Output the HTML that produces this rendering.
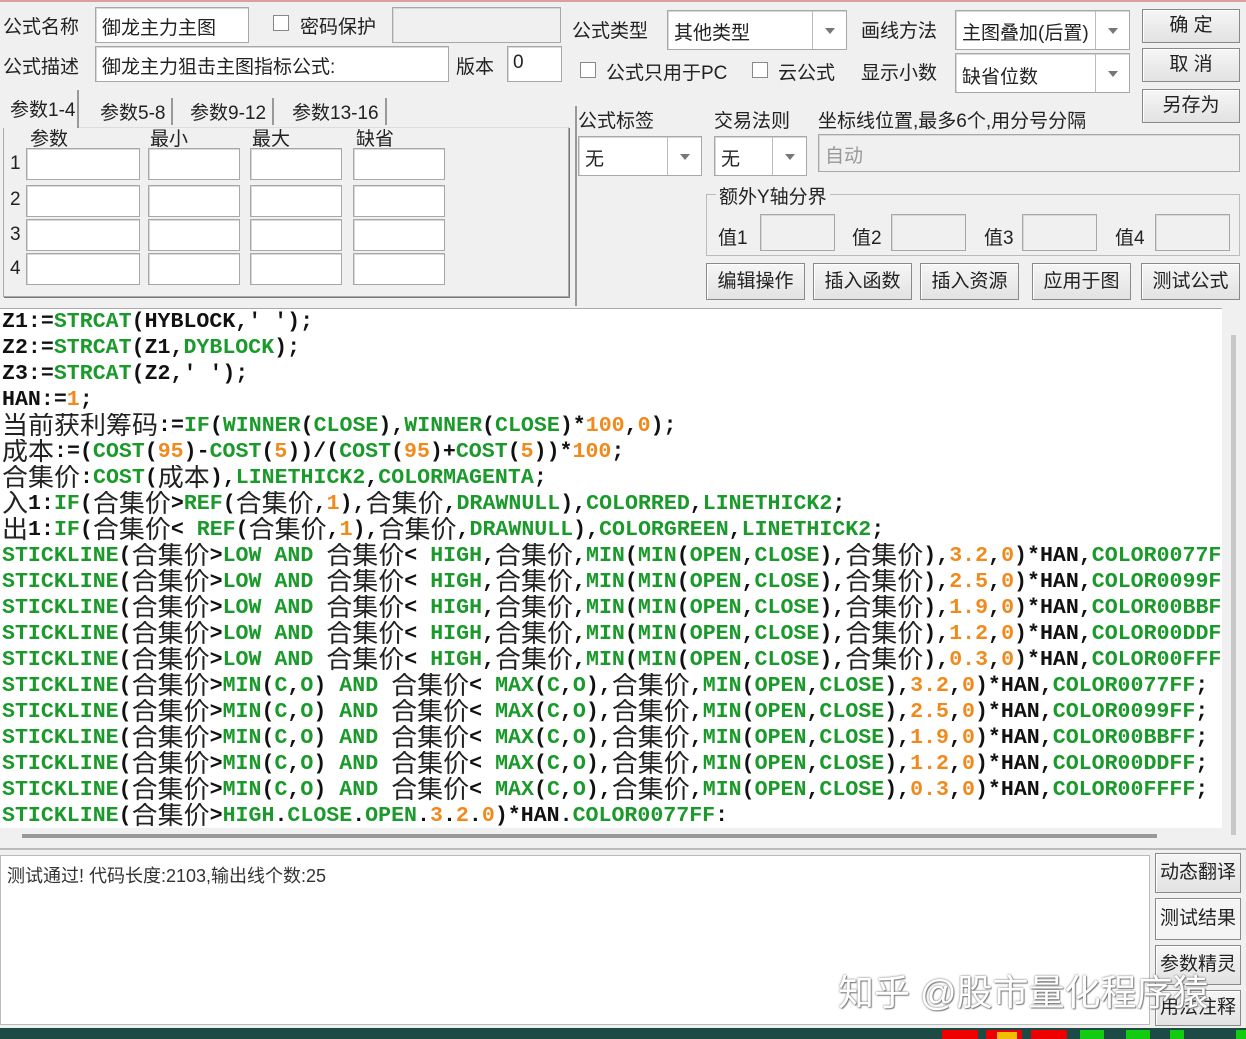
<!DOCTYPE html>
<html><head><meta charset="utf-8"><style>
*{box-sizing:border-box;margin:0;padding:0}
body{width:1246px;height:1039px;background:#f0f0f0;position:relative;overflow:hidden;font-family:"Liberation Sans","Noto Sans CJK SC",sans-serif;font-size:19px;color:#222}
.a{position:absolute;white-space:nowrap}
.in{position:absolute;background:#fff;border:1px solid #a8a8a8;box-shadow:inset 1px 1px 0 #d8d8d8}
.dis{background:#f0f0f0}
.btn{position:absolute;background:linear-gradient(#f6f6f6,#e2e2e2);border:1px solid #8a8a8a;box-shadow:inset 1px 1px 0 #fff;text-align:center;font-size:19px}
.cb{position:absolute;width:16px;height:16px;border:1px solid #888;background:#fff}
.dd{position:absolute;top:0;right:0;width:34px;height:100%;border-left:1px solid #bbb}
.dd:after{content:"";position:absolute;left:12px;top:45%;border:5px solid transparent;border-top:6px solid #777}
#code{position:absolute;left:0;top:308px;width:1222px;height:520px;background:#fff;overflow:hidden;border-top:1px solid #aaa}
.l{height:26px;line-height:26px;font-family:"Liberation Mono",monospace;font-weight:bold;font-size:21.6px;color:#111;white-space:nowrap;padding-left:2px;overflow:hidden}
.l i{font-style:normal;color:#1a9a2a}
.l b{color:#f08a1c}
.l u{text-decoration:none;font-family:"Noto Sans CJK SC",sans-serif;font-weight:normal;font-size:26px;line-height:22px;display:inline-block;height:26px;vertical-align:top;color:#222}
</style></head><body>
<div class="a" style="left:0;top:0;width:1246px;height:2px;background:#d9a0a0"></div>
<div class="a" style="left:3px;top:12px">公式名称</div>
<div class="in" style="left:95px;top:7px;width:154px;height:36px"></div><div class="a" style="left:102px;top:13px">御龙主力主图</div>
<div class="cb" style="left:273px;top:15px"></div><div class="a" style="left:300px;top:12px">密码保护</div>
<div class="in dis" style="left:392px;top:7px;width:169px;height:36px"></div>
<div class="a" style="left:3px;top:52px">公式描述</div>
<div class="in" style="left:95px;top:46px;width:354px;height:36px"></div><div class="a" style="left:102px;top:52px">御龙主力狙击主图指标公式:</div>
<div class="a" style="left:456px;top:52px">版本</div>
<div class="in" style="left:507px;top:46px;width:55px;height:36px"></div><div class="a" style="left:513px;top:52px">0</div>
<div class="a" style="left:3px;top:127px;width:566px;height:170px;border:1px solid #aaa;border-top:1px solid #ddd;box-shadow:1px 1px 0 #777"></div>
<div class="a" style="left:3px;top:90px;width:76px;height:38px;background:#f0f0f0;border-right:2px solid #999"></div>
<div class="a" style="left:10px;top:95px">参数1-4</div>
<div class="a" style="left:100px;top:98px;border-right:2px solid #999;padding-right:6px">参数5-8</div>
<div class="a" style="left:190px;top:98px;border-right:2px solid #999;padding-right:6px">参数9-12</div>
<div class="a" style="left:292px;top:98px;border-right:2px solid #999;padding-right:6px">参数13-16</div>
<div class="a" style="left:30px;top:124px">参数</div><div class="a" style="left:150px;top:124px">最小</div><div class="a" style="left:252px;top:124px">最大</div><div class="a" style="left:356px;top:124px">缺省</div>
<div class="a" style="left:10px;top:153px">1</div><div class="a" style="left:10px;top:189px">2</div><div class="a" style="left:10px;top:224px">3</div><div class="a" style="left:10px;top:258px">4</div>
<div class="in" style="left:26px;top:148px;width:114px;height:32px"></div><div class="in" style="left:148px;top:148px;width:92px;height:32px"></div><div class="in" style="left:250px;top:148px;width:92px;height:32px"></div><div class="in" style="left:353px;top:148px;width:92px;height:32px"></div>
<div class="in" style="left:26px;top:185px;width:114px;height:32px"></div><div class="in" style="left:148px;top:185px;width:92px;height:32px"></div><div class="in" style="left:250px;top:185px;width:92px;height:32px"></div><div class="in" style="left:353px;top:185px;width:92px;height:32px"></div>
<div class="in" style="left:26px;top:219px;width:114px;height:32px"></div><div class="in" style="left:148px;top:219px;width:92px;height:32px"></div><div class="in" style="left:250px;top:219px;width:92px;height:32px"></div><div class="in" style="left:353px;top:219px;width:92px;height:32px"></div>
<div class="in" style="left:26px;top:253px;width:114px;height:32px"></div><div class="in" style="left:148px;top:253px;width:92px;height:32px"></div><div class="in" style="left:250px;top:253px;width:92px;height:32px"></div><div class="in" style="left:353px;top:253px;width:92px;height:32px"></div>
<div class="a" style="left:572px;top:16px">公式类型</div>
<div class="in" style="left:667px;top:10px;width:180px;height:40px"><div class="dd"></div></div><div class="a" style="left:674px;top:18px">其他类型</div>
<div class="a" style="left:861px;top:16px">画线方法</div>
<div class="in" style="left:955px;top:10px;width:175px;height:40px"><div class="dd"></div></div><div class="a" style="left:962px;top:18px">主图叠加(后置)</div>
<div class="btn" style="left:1142px;top:9px;width:98px;height:34px;line-height:32px">确 定</div>
<div class="btn" style="left:1142px;top:48px;width:98px;height:34px;line-height:32px">取 消</div>
<div class="btn" style="left:1142px;top:89px;width:98px;height:34px;line-height:32px">另存为</div>
<div class="cb" style="left:580px;top:62px"></div><div class="a" style="left:606px;top:58px">公式只用于PC</div>
<div class="cb" style="left:752px;top:62px"></div><div class="a" style="left:778px;top:58px">云公式</div>
<div class="a" style="left:861px;top:58px">显示小数</div>
<div class="in" style="left:955px;top:53px;width:175px;height:40px"><div class="dd"></div></div><div class="a" style="left:962px;top:62px">缺省位数</div>
<div class="a" style="left:575px;top:106px;height:200px;border-left:2px solid #999"></div>
<div class="a" style="left:578px;top:106px">公式标签</div>
<div class="a" style="left:714px;top:106px">交易法则</div>
<div class="a" style="left:818px;top:106px">坐标线位置,最多6个,用分号分隔</div>
<div class="in" style="left:578px;top:136px;width:124px;height:40px"><div class="dd"></div></div><div class="a" style="left:585px;top:144px">无</div>
<div class="in" style="left:714px;top:136px;width:93px;height:40px"><div class="dd"></div></div><div class="a" style="left:721px;top:144px">无</div>
<div class="in dis" style="left:818px;top:134px;width:422px;height:38px"></div><div class="a" style="left:825px;top:141px;color:#999">自动</div>
<div class="a" style="left:706px;top:194px;width:534px;height:62px;border:1px solid #bbb"></div>
<div class="a" style="left:716px;top:182px;background:#f0f0f0;padding:0 3px">额外Y轴分界</div>
<div class="a" style="left:718px;top:223px">值1</div><div class="in dis" style="left:760px;top:214px;width:75px;height:37px"></div>
<div class="a" style="left:852px;top:223px">值2</div><div class="in dis" style="left:891px;top:214px;width:75px;height:37px"></div>
<div class="a" style="left:984px;top:223px">值3</div><div class="in dis" style="left:1022px;top:214px;width:75px;height:37px"></div>
<div class="a" style="left:1115px;top:223px">值4</div><div class="in dis" style="left:1155px;top:214px;width:75px;height:37px"></div>
<div class="btn" style="left:706px;top:263px;width:99px;height:37px;line-height:35px">编辑操作</div>
<div class="btn" style="left:813px;top:263px;width:99px;height:37px;line-height:35px">插入函数</div>
<div class="btn" style="left:920px;top:263px;width:99px;height:37px;line-height:35px">插入资源</div>
<div class="btn" style="left:1032px;top:263px;width:99px;height:37px;line-height:35px">应用于图</div>
<div class="btn" style="left:1141px;top:263px;width:99px;height:37px;line-height:35px">测试公式</div>
<div id="code">
<div class="l">Z1:=<i>STRCAT</i>(HYBLOCK,' ');</div>
<div class="l">Z2:=<i>STRCAT</i>(Z1,<i>DYBLOCK</i>);</div>
<div class="l">Z3:=<i>STRCAT</i>(Z2,' ');</div>
<div class="l">HAN:=<b>1</b>;</div>
<div class="l"><u>当前获利筹码</u>:=<i>IF</i>(<i>WINNER</i>(<i>CLOSE</i>),<i>WINNER</i>(<i>CLOSE</i>)*<b>100</b>,<b>0</b>);</div>
<div class="l"><u>成本</u>:=(<i>COST</i>(<b>95</b>)-<i>COST</i>(<b>5</b>))/(<i>COST</i>(<b>95</b>)+<i>COST</i>(<b>5</b>))*<b>100</b>;</div>
<div class="l"><u>合集价</u>:<i>COST</i>(<u>成本</u>),<i>LINETHICK2</i>,<i>COLORMAGENTA</i>;</div>
<div class="l"><u>入</u>1:<i>IF</i>(<u>合集价</u>&gt;<i>REF</i>(<u>合集价</u>,<b>1</b>),<u>合集价</u>,<i>DRAWNULL</i>),<i>COLORRED</i>,<i>LINETHICK2</i>;</div>
<div class="l"><u>出</u>1:<i>IF</i>(<u>合集价</u>&lt; <i>REF</i>(<u>合集价</u>,<b>1</b>),<u>合集价</u>,<i>DRAWNULL</i>),<i>COLORGREEN</i>,<i>LINETHICK2</i>;</div>
<div class="l"><i>STICKLINE</i>(<u>合集价</u>&gt;<i>LOW AND</i> <u>合集价</u>&lt; <i>HIGH</i>,<u>合集价</u>,<i>MIN</i>(<i>MIN</i>(<i>OPEN</i>,<i>CLOSE</i>),<u>合集价</u>),<b>3.2</b>,<b>0</b>)*HAN,<i>COLOR0077FF</i>;</div>
<div class="l"><i>STICKLINE</i>(<u>合集价</u>&gt;<i>LOW AND</i> <u>合集价</u>&lt; <i>HIGH</i>,<u>合集价</u>,<i>MIN</i>(<i>MIN</i>(<i>OPEN</i>,<i>CLOSE</i>),<u>合集价</u>),<b>2.5</b>,<b>0</b>)*HAN,<i>COLOR0099FF</i>;</div>
<div class="l"><i>STICKLINE</i>(<u>合集价</u>&gt;<i>LOW AND</i> <u>合集价</u>&lt; <i>HIGH</i>,<u>合集价</u>,<i>MIN</i>(<i>MIN</i>(<i>OPEN</i>,<i>CLOSE</i>),<u>合集价</u>),<b>1.9</b>,<b>0</b>)*HAN,<i>COLOR00BBFF</i>;</div>
<div class="l"><i>STICKLINE</i>(<u>合集价</u>&gt;<i>LOW AND</i> <u>合集价</u>&lt; <i>HIGH</i>,<u>合集价</u>,<i>MIN</i>(<i>MIN</i>(<i>OPEN</i>,<i>CLOSE</i>),<u>合集价</u>),<b>1.2</b>,<b>0</b>)*HAN,<i>COLOR00DDFF</i>;</div>
<div class="l"><i>STICKLINE</i>(<u>合集价</u>&gt;<i>LOW AND</i> <u>合集价</u>&lt; <i>HIGH</i>,<u>合集价</u>,<i>MIN</i>(<i>MIN</i>(<i>OPEN</i>,<i>CLOSE</i>),<u>合集价</u>),<b>0.3</b>,<b>0</b>)*HAN,<i>COLOR00FFFF</i>;</div>
<div class="l"><i>STICKLINE</i>(<u>合集价</u>&gt;<i>MIN</i>(<i>C</i>,<i>O</i>) <i>AND</i> <u>合集价</u>&lt; <i>MAX</i>(<i>C</i>,<i>O</i>),<u>合集价</u>,<i>MIN</i>(<i>OPEN</i>,<i>CLOSE</i>),<b>3.2</b>,<b>0</b>)*HAN,<i>COLOR0077FF</i>;</div>
<div class="l"><i>STICKLINE</i>(<u>合集价</u>&gt;<i>MIN</i>(<i>C</i>,<i>O</i>) <i>AND</i> <u>合集价</u>&lt; <i>MAX</i>(<i>C</i>,<i>O</i>),<u>合集价</u>,<i>MIN</i>(<i>OPEN</i>,<i>CLOSE</i>),<b>2.5</b>,<b>0</b>)*HAN,<i>COLOR0099FF</i>;</div>
<div class="l"><i>STICKLINE</i>(<u>合集价</u>&gt;<i>MIN</i>(<i>C</i>,<i>O</i>) <i>AND</i> <u>合集价</u>&lt; <i>MAX</i>(<i>C</i>,<i>O</i>),<u>合集价</u>,<i>MIN</i>(<i>OPEN</i>,<i>CLOSE</i>),<b>1.9</b>,<b>0</b>)*HAN,<i>COLOR00BBFF</i>;</div>
<div class="l"><i>STICKLINE</i>(<u>合集价</u>&gt;<i>MIN</i>(<i>C</i>,<i>O</i>) <i>AND</i> <u>合集价</u>&lt; <i>MAX</i>(<i>C</i>,<i>O</i>),<u>合集价</u>,<i>MIN</i>(<i>OPEN</i>,<i>CLOSE</i>),<b>1.2</b>,<b>0</b>)*HAN,<i>COLOR00DDFF</i>;</div>
<div class="l"><i>STICKLINE</i>(<u>合集价</u>&gt;<i>MIN</i>(<i>C</i>,<i>O</i>) <i>AND</i> <u>合集价</u>&lt; <i>MAX</i>(<i>C</i>,<i>O</i>),<u>合集价</u>,<i>MIN</i>(<i>OPEN</i>,<i>CLOSE</i>),<b>0.3</b>,<b>0</b>)*HAN,<i>COLOR00FFFF</i>;</div>
<div class="l"><i>STICKLINE</i>(<u>合集价</u>&gt;<i>HIGH</i>.<i>CLOSE</i>.<i>OPEN</i>.<b>3</b>.<b>2</b>.<b>0</b>)*HAN.<i>COLOR0077FF</i>:</div>
</div>
<div class="a" style="left:1222px;top:308px;width:24px;height:540px;background:#f0f0f0"></div>
<div class="a" style="left:1231px;top:335px;width:5px;height:500px;background:#c8c8c8"></div>
<div class="a" style="left:0;top:828px;width:1222px;height:20px;background:#f0f0f0"></div>
<div class="a" style="left:22px;top:834px;width:1135px;height:4px;background:#999"></div>
<div class="a" style="left:0;top:848px;width:1246px;height:2px;background:#bbb"></div>
<div class="a" style="left:0;top:855px;width:1150px;height:170px;background:#fff;border:1px solid #bbb"></div>
<div class="a" style="left:7px;top:862px;font-size:18px;color:#333">测试通过! 代码长度:2103,输出线个数:25</div>
<div class="btn" style="left:1155px;top:853px;width:86px;height:40px;line-height:38px">动态翻译</div>
<div class="btn" style="left:1155px;top:898px;width:86px;height:42px;line-height:40px;background:#f4f4f4">测试结果</div>
<div class="btn" style="left:1155px;top:945px;width:86px;height:40px;line-height:38px">参数精灵</div>
<div class="btn" style="left:1155px;top:990px;width:86px;height:36px;line-height:34px">用法注释</div>
<div class="a" style="left:838px;top:964px;font-size:36px;color:#fff;text-shadow:0 0 2px #666,1px 1px 1px #888">知乎 @股市量化程序猿</div>
<div class="a" style="left:0;top:1028px;width:1246px;height:11px;background:#1c4a45"></div>
<div class="a" style="left:942px;top:1030px;width:36px;height:9px;background:#e00"></div>
<div class="a" style="left:986px;top:1030px;width:36px;height:9px;background:#e00"></div>
<div class="a" style="left:997px;top:1032px;width:20px;height:7px;background:#f0c000"></div>
<div class="a" style="left:1031px;top:1030px;width:36px;height:9px;background:#e00"></div>
<div class="a" style="left:1080px;top:1030px;width:24px;height:9px;background:#1c1"></div>
<div class="a" style="left:1126px;top:1030px;width:24px;height:9px;background:#1c1"></div>
<div class="a" style="left:1170px;top:1030px;width:14px;height:9px;background:#1c1"></div>
<div class="a" style="left:1236px;top:1030px;width:10px;height:9px;background:#1c1"></div>
</body></html>
